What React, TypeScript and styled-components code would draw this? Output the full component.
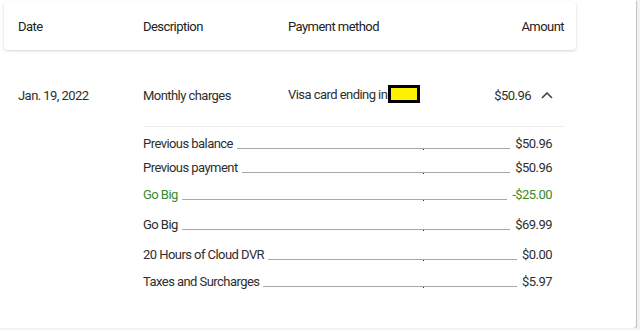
import React from 'react';
import styled, { createGlobalStyle } from 'styled-components';

const GlobalStyle = createGlobalStyle`
  html, body {
    margin: 0;
    padding: 0;
    background: #f3f3f3;
  }
  body {
    font-family: Roboto, "Liberation Sans", sans-serif;
    color: #2e2e2e;
  }
`;

type Charge = {
  label: string;
  amount: string;
  promo?: boolean;
  gap: number;
};

const charges: Charge[] = [
  { label: 'Previous balance', amount: '$50.96', gap: 7 },
  { label: 'Previous payment', amount: '$50.96', gap: 4 },
  { label: 'Go Big', amount: '-$25.00', promo: true, gap: 7 },
  { label: 'Go Big', amount: '$69.99', gap: 10 },
  { label: '20 Hours of Cloud DVR', amount: '$0.00', gap: 10 },
  { label: 'Taxes and Surcharges', amount: '$5.97', gap: 7 },
];

export default function App() {
  return (
    <>
      <GlobalStyle />
      <Page>
        <HeaderCard>
          <span>Date</span>
          <span>Description</span>
          <span>Payment method</span>
          <HeadAmount>Amount</HeadAmount>
        </HeaderCard>

        <BillRow>
          <span>Jan. 19, 2022</span>
          <span>Monthly charges</span>
          <span>
            Visa card ending in<Redacted />
          </span>
          <AmountCell>
            $50.96
            <Chevron viewBox="0 0 12 7">
              <polyline points="1,6 6,1 11,6" />
            </Chevron>
          </AmountCell>
        </BillRow>

        <Details>
          {charges.map((c, i) => (
            <DetailRow key={i} $gap={c.gap} $promo={c.promo}>
              <span>{c.label}</span>
              <Leader />
              <DetailAmount>{c.amount}</DetailAmount>
            </DetailRow>
          ))}
        </Details>
      </Page>
    </>
  );
}

const Page = styled.div`
  width: 636px;
  height: 328px;
  box-sizing: border-box;
  padding: 2px 0 0 4px;
  background: #fff;
  border-radius: 0 0 3px 0;
  box-shadow: 1px 1px 1px rgba(0, 0, 0, 0.22);
  font-size: 13px;
  letter-spacing: -0.55px;
`;

const HeaderCard = styled.div`
  width: 572px;
  height: 48px;
  box-sizing: border-box;
  padding: 0 12px 0 14px;
  display: grid;
  grid-template-columns: 125px 145px 1fr auto;
  align-items: center;
  background: #fff;
  border-radius: 4px;
  box-shadow: 0 1px 3px rgba(0, 0, 0, 0.18);
  color: #222;
`;

const HeadAmount = styled.span`
  text-align: right;
`;

const BillRow = styled.div`
  width: 560px;
  height: 20px;
  margin-top: 35px;
  box-sizing: border-box;
  padding: 0 11px 0 14px;
  display: grid;
  grid-template-columns: 125px 145px 1fr auto;
  align-items: center;
`;

const Redacted = styled.span`
  display: inline-block;
  width: 32px;
  height: 18px;
  box-sizing: border-box;
  margin: -2px 0 0 1px;
  vertical-align: middle;
  border: 3px solid #000;
  background: #fff200;
`;

const AmountCell = styled.span`
  display: flex;
  align-items: center;
  gap: 10px;
`;

const Chevron = styled.svg`
  width: 12px;
  height: 7px;
  fill: none;
  stroke: #444;
  stroke-width: 1.6;
`;

const Details = styled.div`
  width: 421px;
  margin: 21px 0 0 139px;
  box-sizing: border-box;
  padding-right: 12px;
  border-top: 1px solid #ececec;
`;

const DetailRow = styled.div<{ $gap: number; $promo?: boolean }>`
  position: relative;
  height: 20px;
  margin-top: ${(p) => p.$gap}px;
  display: flex;
  align-items: baseline;
  color: ${(p) => (p.$promo ? '#3a8a2c' : '#2e2e2e')};
  line-height: 20px;

  &::after {
    content: '';
    position: absolute;
    left: 280px;
    top: 15px;
    width: 1px;
    height: 1px;
    background: #333;
  }
`;

const Leader = styled.span`
  flex: 1;
  margin: 0 5px 0 4px;
  border-bottom: 1px solid #a8a8a8;
  transform: translateY(1px);
`;

const DetailAmount = styled.span`
  text-align: right;
`;
